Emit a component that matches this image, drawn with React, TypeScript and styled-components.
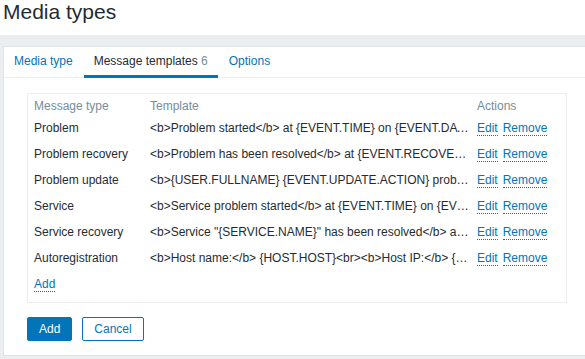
import React from 'react';
import styled, { createGlobalStyle } from 'styled-components';

type TemplateRow = {
    type: string
    template: string
}

const rows: TemplateRow[] = [
    { type: 'Problem', template: '<b>Problem started</b> at {EVENT.TIME} on {EVENT.DATE}<br><b>Problem name:</b> {EVENT.NAME}<br><b>Host:</b> {HOST.NAME}' },
    { type: 'Problem recovery', template: '<b>Problem has been resolved</b> at {EVENT.RECOVERY.TIME} on {EVENT.RECOVERY.DATE}<br><b>Problem name:</b> {EVENT.NAME}' },
    { type: 'Problem update', template: '<b>{USER.FULLNAME} {EVENT.UPDATE.ACTION} problem</b> at {EVENT.UPDATE.DATE} {EVENT.UPDATE.TIME}.<br>{EVENT.UPDATE.MESSAGE}' },
    { type: 'Service', template: '<b>Service problem started</b> at {EVENT.TIME} on {EVENT.DATE}<br><b>Service problem name:</b> {EVENT.NAME}' },
    { type: 'Service recovery', template: '<b>Service "{SERVICE.NAME}" has been resolved</b> at {EVENT.RECOVERY.TIME} on {EVENT.RECOVERY.DATE}' },
    { type: 'Autoregistration', template: '<b>Host name:</b> {HOST.HOST}<br><b>Host IP:</b> {HOST.IP}<br><b>Agent port:</b> {HOST.PORT}' },
];

const GlobalStyle = createGlobalStyle`
    body {
        margin: 0;
        font-family: "Liberation Sans", Arial, sans-serif;
        font-size: 12px;
        color: #1f2c33;
        background: #ffffff;
        overflow: hidden;
    }
`

export default function App() {
    return (
        <>
            <GlobalStyle />
            <Header>
                <Title>Media types</Title>
            </Header>
            <Main>
                <Panel>
                    <TabBar>
                        <Tab>Media type</Tab>
                        <Tab $active>Message templates <Count>6</Count></Tab>
                        <Tab>Options</Tab>
                    </TabBar>
                    <Body>
                        <TableBox>
                            <HeadCell>Message type</HeadCell>
                            <HeadCell>Template</HeadCell>
                            <HeadCell>Actions</HeadCell>
                            {rows.map((r) => (
                                <React.Fragment key={r.type}>
                                    <Cell>{r.type}</Cell>
                                    <TemplateCell>{r.template}</TemplateCell>
                                    <Cell>
                                        <Link href="#">Edit</Link>
                                        <Link href="#">Remove</Link>
                                    </Cell>
                                </React.Fragment>
                            ))}
                            <AddRow>
                                <Link href="#">Add</Link>
                            </AddRow>
                        </TableBox>
                        <Buttons>
                            <Button type="button">Add</Button>
                            <Button type="button" $secondary>Cancel</Button>
                        </Buttons>
                    </Body>
                </Panel>
            </Main>
        </>
    );
}

const Header = styled.header`
    height: 35px;
    background: #ffffff;
`

const Title = styled.h1`
    margin: 0;
    padding-left: 3px;
    font-size: 21px;
    font-weight: normal;
    line-height: 24px;
    color: #1f2c33;
`

const Main = styled.main`
    background: #ebeef0;
    padding: 11px 0 3px 3px;
`

const Panel = styled.div`
    background: #ffffff;
    border: 1px solid #dfe4e7;
    border-right: none;
`

const TabBar = styled.div`
    display: flex;
    height: 30px;
    border-bottom: 1px solid #ebeef0;
`

const Tab = styled.div<{ $active?: boolean }>`
    box-sizing: border-box;
    height: 31px;
    padding: 0 10px;
    margin-right: 1px;
    line-height: 28px;
    color: ${(p) => (p.$active ? '#1f2c33' : '#0275b8')};
    border-bottom: 3px solid ${(p) => (p.$active ? '#0275b8' : 'transparent')};
    white-space: nowrap;
`

const Count = styled.span`
    color: #768d99;
`

const Body = styled.div`
    padding: 15px 0 14px 23px;
`

const TableBox = styled.div`
    box-sizing: border-box;
    width: 540px;
    border: 1px solid #ebeef0;
    padding: 0 0 5px 6px;
    display: grid;
    grid-template-columns: 116px 327px 1fr;
`

const HeadCell = styled.div`
    height: 21px;
    padding-top: 3px;
    box-sizing: border-box;
    line-height: 18px;
    color: #768d99;
`

const Cell = styled.div`
    height: 26px;
    line-height: 26px;
    white-space: nowrap;
`

const TemplateCell = styled(Cell)`
    padding-right: 8px;
    overflow: hidden;
    text-overflow: ellipsis;
`

const AddRow = styled(Cell)`
    grid-column: 1 / -1;
`

const Link = styled.a`
    color: #0275b8;
    text-decoration: none;
    border-bottom: 1px dotted #0275b8;

    & + & {
        margin-left: 5px;
    }
`

const Buttons = styled.div`
    display: flex;
    gap: 10px;
    margin-top: 14px;
`

const Button = styled.button<{ $secondary?: boolean }>`
    box-sizing: border-box;
    height: 24px;
    padding: 0 11px;
    border-radius: 2px;
    border: 1px solid #0275b8;
    background: ${(p) => (p.$secondary ? '#ffffff' : '#0275b8')};
    color: ${(p) => (p.$secondary ? '#0275b8' : '#ffffff')};
    font-family: "Liberation Sans", Arial, sans-serif;
    font-size: 12px;
    line-height: 22px;
    cursor: pointer;
`
